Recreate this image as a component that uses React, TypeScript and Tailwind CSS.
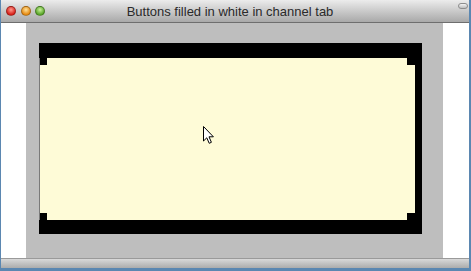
// Window with a cream drawing surface framed in black
function TrafficLight({ from, to }: { from: string; to: string }) {
  return (
    <span
      className="block h-[10px] w-[10px] rounded-full border border-black/30"
      style={{ background: `radial-gradient(circle at 50% 35%, ${from} 0%, ${to} 70%)` }}
    />
  );
}

function Cursor() {
  return (
    <svg width="13" height="20" viewBox="0 0 13 20" className="block">
      <path
        d="M1.5 1.5 L1.5 16 L4.8 12.8 L7.2 18.3 L9.4 17.3 L7 11.8 L11.4 11.8 Z"
        fill="#fff"
        stroke="#000"
        strokeWidth="1"
        strokeLinejoin="round"
      />
    </svg>
  );
}

export default function App() {
  return (
    <div className="h-[271px] w-[471px] overflow-hidden bg-[#5b87b1] pl-px pr-[2px] font-['Liberation_Sans',Arial,sans-serif]">
      <div className="flex h-[268px] flex-col">
        {/* Title bar */}
        <div className="relative flex h-[23px] items-center border-b border-[#6e6e6e] bg-gradient-to-b from-[#ececec] to-[#a9a9a9]">
          <div className="flex items-center gap-[4.5px] pl-[5px]">
            <TrafficLight from="#ff9a8f" to="#d8221a" />
            <TrafficLight from="#ffe29a" to="#e68a12" />
            <TrafficLight from="#c9f29a" to="#5aa62a" />
          </div>
          <div className="absolute inset-x-0 top-[5px] pr-[10px] text-center text-[13px] leading-none text-[#2a2a2a]">
            Buttons filled in white in channel tab
          </div>
          <span className="absolute right-[1px] top-[3px] h-[6px] w-[10px] rounded-full border border-[#8c8c8c] bg-gradient-to-b from-[#f4f4f4] to-[#bdbdbd]" />
        </div>

        {/* Body */}
        <div className="flex flex-1">
          <div className="w-[25px] bg-white" />
          <div className="flex-1 bg-[#bebebe] pl-[13px] pt-[20px]">
            <div className="flex h-[191px] w-[383px] flex-col bg-black pb-[14px] pr-[7px] pt-[15px]">
              <div className="relative flex flex-1 items-start justify-center border-l border-[#7a7a7a] bg-[#fefbd7]">
                <span className="absolute left-0 top-0 h-[7px] w-[7px] bg-black" />
                <span className="absolute right-0 top-0 h-[7px] w-[8px] bg-black" />
                <span className="absolute bottom-0 left-0 h-[7px] w-[7px] bg-black" />
                <span className="absolute bottom-0 right-0 h-[7px] w-[8px] bg-black" />
                <div className="ml-[-39px] mt-[67px]">
                  <Cursor />
                </div>
              </div>
            </div>
          </div>
          <div className="w-[26px] bg-white" />
        </div>

        {/* Bottom bar */}
        <div className="h-[10px] border-t border-[#9a9a9a] bg-gradient-to-b from-[#d9d9d9] to-[#acacac]" />
      </div>
    </div>
  );
}
